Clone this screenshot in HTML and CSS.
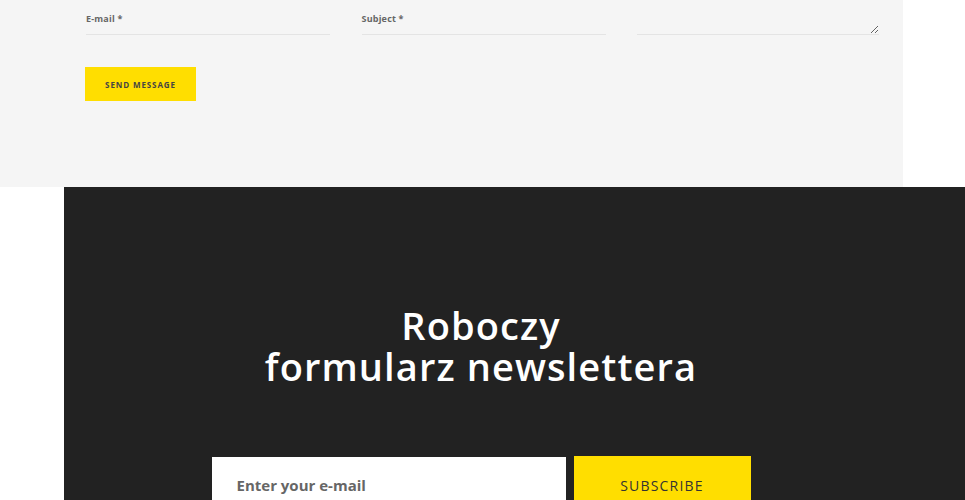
FILE: index.html
```html
<!DOCTYPE html>
<html lang="pl">
<head>
  <meta charset="UTF-8" />
  <meta name="viewport" content="width=device-width, initial-scale=1.0" />
  <title>Kontakt i newsletter</title>
  <link rel="stylesheet" href="styles.css">
</head>
<body>

  <!-- Contact form -->
  <section class="contact">
    <div class="contact-fields">
      <div class="field">
        <label for="email">E-mail *</label>
        <input type="email" id="email" />
      </div>
      <div class="field">
        <label for="subject">Subject *</label>
        <input type="text" id="subject" />
      </div>
      <div class="field field-message">
        <textarea id="message"></textarea>
      </div>
    </div>
    <button class="send-btn">Send message</button>
  </section>

  <!-- Newsletter -->
  <section class="newsletter">
    <h2>Roboczy<br>formularz newslettera</h2>
    <form class="newsletter-form" onsubmit="return false;">
      <input type="email" placeholder="Enter your e-mail" />
      <button type="submit">Subscribe</button>
    </form>
  </section>

</body>
</html>
```

FILE: styles.css
```css
body {
  margin: 0;
  background: #fff;
  font-family: "Open Sans", Arial, sans-serif;
  overflow: hidden;
}

.contact {
  width: 903px;
  height: 187px;
  box-sizing: border-box;
  background: #f5f5f5;
  padding: 12px 0 0 86px;
}

.contact-fields {
  display: grid;
  grid-template-columns: 244px 244px 242px;
  column-gap: 31.5px;
}

.field {
  display: flex;
  flex-direction: column;
  height: 22px;
  border-bottom: 1px solid #e4e4e4;
}

.field label {
  font-size: 9px;
  font-weight: 700;
  color: #666;
  letter-spacing: 0.2px;
}

.field input {
  border: none;
  background: transparent;
  flex: 1;
  outline: none;
  padding: 0;
}

.field-message textarea {
  flex: 1;
  border: none;
  background: transparent;
  resize: vertical;
  outline: none;
  height: 100%;
  padding: 0;
}

.send-btn {
  margin-top: 32px;
  margin-left: -1px;
  width: 111px;
  height: 34px;
  background: #ffde00;
  border: none;
  color: #444;
  font-family: "Open Sans", Arial, sans-serif;
  font-size: 8px;
  font-weight: 700;
  letter-spacing: 0.9px;
  text-transform: uppercase;
  cursor: pointer;
}

.newsletter {
  margin-left: 64px;
  height: 313px;
  box-sizing: border-box;
  background: #222;
  padding: 118px 67px 0 0;
  text-align: center;
}

.newsletter h2 {
  margin: 0;
  color: #fff;
  font-size: 38px;
  font-weight: 550;
  line-height: 41px;
  letter-spacing: 1.1px;
}

.newsletter-form {
  margin-top: 69px;
  display: flex;
  justify-content: center;
  align-items: center;
  gap: 8px;
}

.newsletter-form input {
  width: 354px;
  height: 56px;
  box-sizing: border-box;
  border: none;
  padding: 0 25px;
  font-family: "Open Sans", Arial, sans-serif;
  font-size: 15px;
  font-weight: 700;
  outline: none;
}

.newsletter-form input::placeholder {
  color: #666;
}

.newsletter-form button {
  width: 177px;
  height: 58px;
  border: none;
  background: #ffde00;
  color: #333;
  font-family: "Open Sans", Arial, sans-serif;
  font-size: 14px;
  font-weight: 500;
  letter-spacing: 1.2px;
  text-transform: uppercase;
  cursor: pointer;
}
```
